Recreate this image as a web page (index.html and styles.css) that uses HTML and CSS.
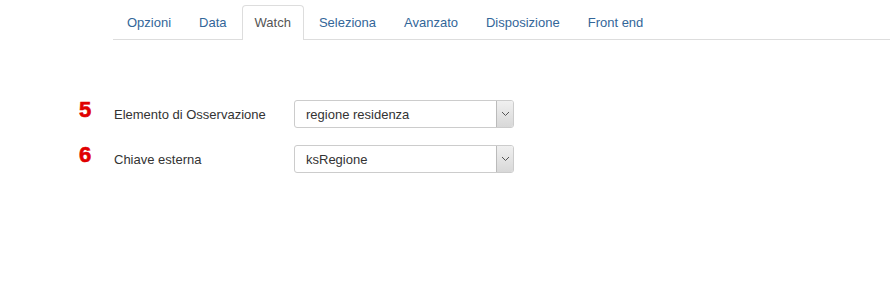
FILE: index.html
```html
<!DOCTYPE html>
<html>
<head>
<meta charset="utf-8">
<link rel="stylesheet" href="styles.css">
</head>
<body>
<div class="page">
  <ul class="tabs">
    <li class="tab">Opzioni</li>
    <li class="tab">Data</li>
    <li class="tab active">Watch</li>
    <li class="tab">Seleziona</li>
    <li class="tab">Avanzato</li>
    <li class="tab">Disposizione</li>
    <li class="tab">Front end</li>
  </ul>
  <div class="form">
    <div class="row">
      <span class="num">5</span>
      <span class="label">Elemento di Osservazione</span>
      <div class="select">
        <span class="value">regione residenza</span>
        <span class="btn"><svg width="9" height="6" viewBox="0 0 9 6"><path d="M1 1 L4.5 4.5 L8 1" fill="none" stroke="#555" stroke-width="1"/></svg></span>
      </div>
    </div>
    <div class="row">
      <span class="num">6</span>
      <span class="label">Chiave esterna</span>
      <div class="select">
        <span class="value">ksRegione</span>
        <span class="btn"><svg width="9" height="6" viewBox="0 0 9 6"><path d="M1 1 L4.5 4.5 L8 1" fill="none" stroke="#555" stroke-width="1"/></svg></span>
      </div>
    </div>
  </div>
</div>
</body>
</html>
```
FILE: styles.css
```css
html, body {
  margin: 0;
  padding: 0;
  background: #fff;
}
.page {
  width: 890px;
  height: 300px;
  font-family: "Liberation Sans", Arial, sans-serif;
  font-size: 13px;
  color: #333;
}
.tabs {
  list-style: none;
  margin: 0 0 0 113px;
  padding: 5px 0 0 1px;
  display: flex;
  border-bottom: 1px solid #ddd;
  height: 34px;
}
.tab {
  color: #336699;
  padding: 0 12px;
  margin-right: 2px;
  line-height: 33px;
  border: 1px solid transparent;
  border-bottom: none;
  border-radius: 4px 4px 0 0;
}
.tab.active {
  color: #555;
  background: #fff;
  border-color: #ddd;
  height: 34px;
  margin-bottom: -1px;
}
.form {
  padding-top: 60px;
  display: flex;
  flex-direction: column;
  gap: 17px;
}
.row {
  display: flex;
  align-items: center;
  height: 28px;
}
.num {
  width: 35px;
  margin-left: 79px;
  color: #e00000;
  font-weight: bold;
  font-size: 22px;
  line-height: 20px;
  -webkit-text-stroke: 0.6px #e00000;
  position: relative;
  top: -4px;
}
.label {
  width: 180px;
}
.select {
  width: 218px;
  height: 26px;
  border: 1px solid #ccc;
  border-radius: 3px;
  display: flex;
  align-items: center;
  justify-content: space-between;
  overflow: hidden;
  background: #fff;
}
.value {
  padding-left: 11px;
  color: #333;
}
.btn {
  width: 16px;
  height: 26px;
  border-left: 1px solid #bbb;
  background: linear-gradient(#f0f0f0, #d8d8d8);
  display: flex;
  align-items: center;
  justify-content: center;
}
```
